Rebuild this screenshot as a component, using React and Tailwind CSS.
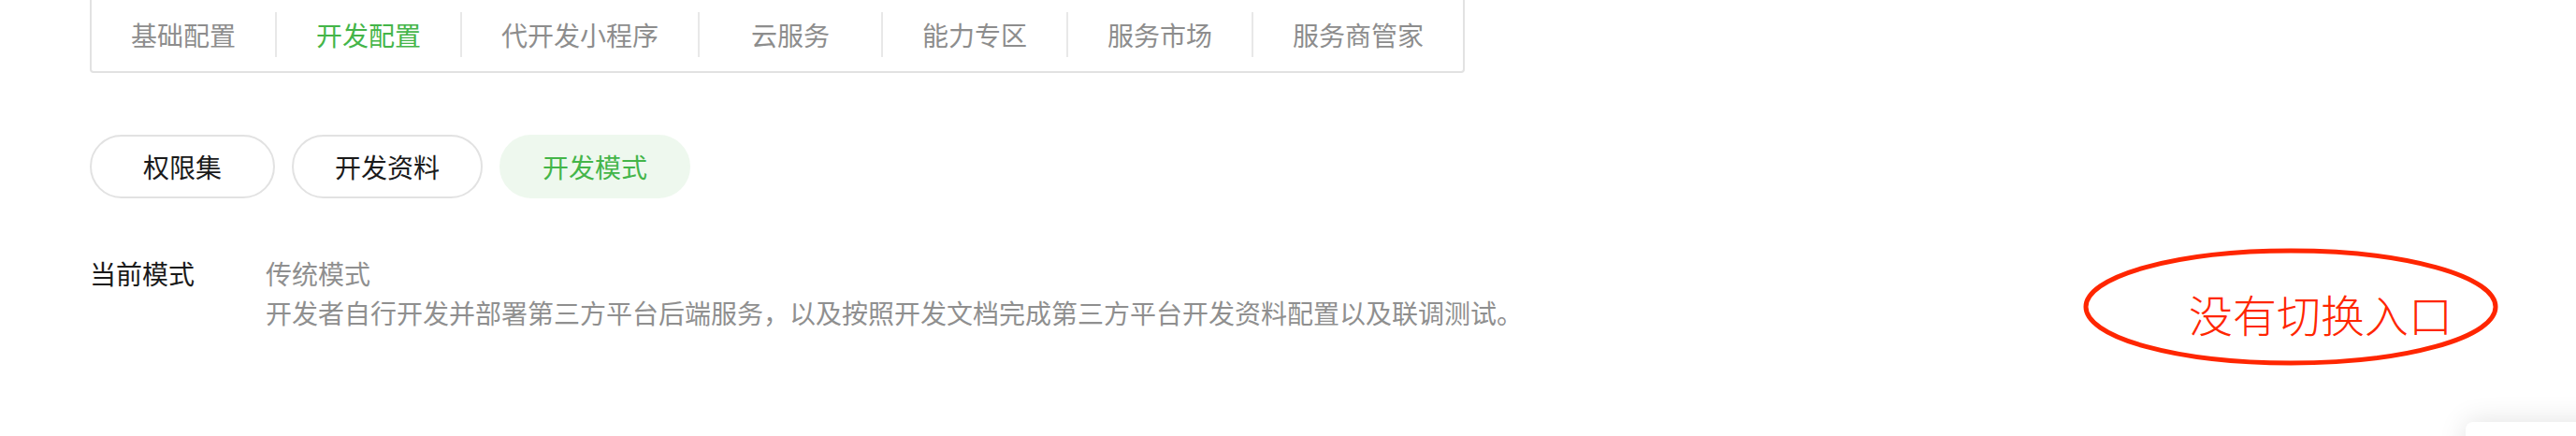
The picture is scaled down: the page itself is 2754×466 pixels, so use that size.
import React from 'react';

const topTabs = ['基础配置', '开发配置', '代开发小程序', '云服务', '能力专区', '服务市场', '服务商管家'];
const subTabs = ['权限集', '开发资料', '开发模式'];

function App() {
  const activeTop = 1;
  const activeSub = 2;

  return (
    <div className="relative w-[2754px] h-[466px] overflow-hidden bg-white font-['Noto_Sans_CJK_SC',sans-serif]">
      <div className="pl-[96px]">
        {/* top nav box */}
        <div className="mt-[-4px] inline-flex items-center border-2 border-[#e2e2e2] rounded-b-[4px] bg-white">
          {topTabs.map((tab, i) => (
            <React.Fragment key={tab}>
              {i > 0 && <div className="w-[2px] h-[48px] bg-[#e8e8e8]"></div>}
              <div
                className={
                  'h-[78px] min-w-[194px] px-[42px] flex items-center justify-center text-[28px] ' +
                  (i === activeTop ? 'text-[#44b549]' : 'text-[#8d8d8d]')
                }
              >
                {tab}
              </div>
            </React.Fragment>
          ))}
        </div>

        {/* sub tabs */}
        <div className="mt-[66px] flex gap-[18px]">
          {subTabs.map((tab, i) => (
            <div
              key={tab}
              className={
                'h-[68px] min-w-[198px] px-[44px] rounded-full flex items-center justify-center text-[28px] border-2 ' +
                (i === activeSub
                  ? 'bg-[#eef8ee] border-[#eef8ee] text-[#44b549]'
                  : 'bg-white border-[#e2e2e2] text-[#1a1a1a]')
              }
            >
              {tab}
            </div>
          ))}
        </div>

        {/* current mode */}
        <div className="mt-[59px] flex text-[28px] leading-[42px]">
          <div className="w-[188px] text-[#1a1a1a]">当前模式</div>
          <div className="text-[#8f8f8f]">
            <div>传统模式</div>
            <div>开发者自行开发并部署第三方平台后端服务，以及按照开发文档完成第三方平台开发资料配置以及联调测试。</div>
          </div>
        </div>
      </div>

      {/* red annotation */}
      <div className="absolute left-[2226px] top-[264px] w-[446px] h-[128px] flex items-center pl-[114px] pt-[12px]">
        <svg className="absolute inset-0" width="446" height="128" viewBox="0 0 446 128">
          <ellipse cx="223" cy="64" rx="219" ry="60" fill="none" stroke="#ff2600" strokeWidth="5" />
        </svg>
        <span className="relative text-[47px] leading-none font-light text-[#ff2600]">没有切换入口</span>
      </div>

      {/* floating widget corner */}
      <div className="absolute left-[2636px] top-[451px] w-[200px] h-[60px] bg-white rounded-tl-[8px] shadow-[0_0_30px_rgba(0,0,0,0.12)]"></div>
    </div>
  );
}

export default App;
